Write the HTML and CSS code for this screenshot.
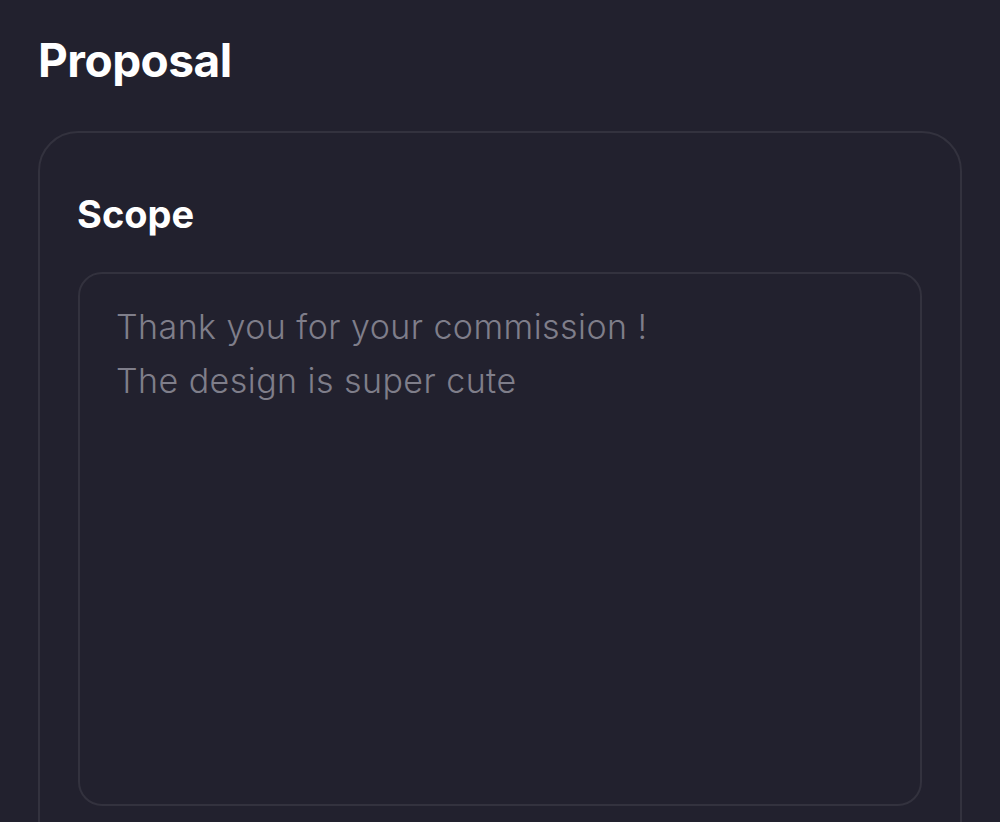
FILE: index.html
```html
<!DOCTYPE html>
<html>
<head>
<meta charset="utf-8">
<link rel="stylesheet" href="styles.css">
</head>
<body>
<main class="page">
  <h1 class="title">Proposal</h1>
  <section class="card">
    <h2 class="label">Scope</h2>
    <div class="field">
      <p class="line">Thank you for your commission !</p>
      <p class="line">The design is super cute</p>
    </div>
  </section>
</main>
</body>
</html>
```
FILE: styles.css
```css
html, body {
  margin: 0;
  padding: 0;
  background: #22212e;
  height: 100%;
  overflow: hidden;
}
.page {
  padding: 32px 38px 0 38px;
  font-family: Inter, "Noto Sans", sans-serif;
}
.title {
  margin: 0;
  font-size: 46px;
  line-height: 56px;
  font-weight: 700;
  color: #ffffff;
  letter-spacing: -0.5px;
}
.card {
  margin-top: 43px;
  border: 2px solid #33323e;
  border-radius: 40px;
  padding: 57px 38px 0 38px;
  height: 700px;
}
.label {
  margin: 0 0 0 -1px;
  font-size: 38px;
  line-height: 48px;
  font-weight: 700;
  color: #ffffff;
}
.field {
  margin-top: 34px;
  height: 478px;
  border: 2px solid #33323e;
  border-radius: 24px;
  padding: 26px 36px;
}
.line {
  margin: 0;
  font-size: 34px;
  line-height: 54px;
  font-weight: 300;
  letter-spacing: 0.45px;
  color: #7f7e8a;
}
```
